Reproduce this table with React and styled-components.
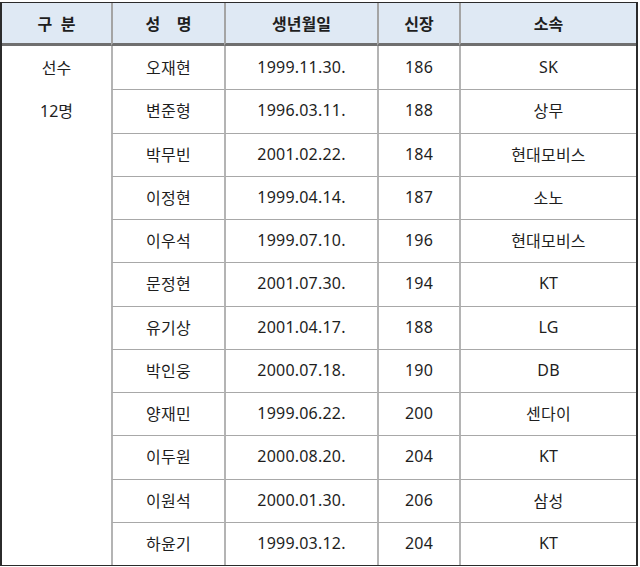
import React from "react";
import styled, { createGlobalStyle } from "styled-components";

const Global = createGlobalStyle`
  html, body { margin: 0; padding: 0; background: #fff; }
  body {
    font-family: "Noto Sans", "Noto Sans CJK KR", sans-serif;
    color: #1e1e1e;
  }
  * { box-sizing: border-box; }
`;

const Page = styled.div`
  padding-top: 2px;
`;

const Grid = styled.div`
  width: 638px;
  height: 564px;
  display: grid;
  grid-template-columns: 109px 113px 153px 82px 177px;
  grid-template-rows: 43px repeat(12, 1fr);
  border: 2px solid #2b2b2b;
  border-top-width: 1px;
  border-bottom-width: 1px;
  font-size: 16px;
`;

const HeadCell = styled.div`
  display: flex;
  align-items: center;
  justify-content: center;
  background: #dfe9f4;
  font-weight: 700;
  font-size: 16px;
  white-space: pre;
  border-left: ${(p) => (p.$first ? "none" : "2px solid #a4a4a4")};
  border-bottom: 3px solid #6f6f6f;
`;

const Cell = styled.div`
  display: flex;
  align-items: center;
  justify-content: center;
  padding-bottom: 2px;
  letter-spacing: 0.2px;
  border-left: 2px solid #b4b4b4;
  border-top: ${(p) => (p.$top ? "none" : "1px solid #a8a8a8")};
`;

const GroupCell = styled.div`
  grid-row: 2 / span 12;
  grid-column: 1;
  display: flex;
  flex-direction: column;
  align-items: center;
`;

const GroupLine = styled.div`
  height: 43.3px;
  padding-bottom: 2px;
  display: flex;
  align-items: center;
`;

const heads = ["구  분", "성    명", "생년월일", "신장", "소속"];

const players = [
  ["오재현", "1999.11.30.", "186", "SK"],
  ["변준형", "1996.03.11.", "188", "상무"],
  ["박무빈", "2001.02.22.", "184", "현대모비스"],
  ["이정현", "1999.04.14.", "187", "소노"],
  ["이우석", "1999.07.10.", "196", "현대모비스"],
  ["문정현", "2001.07.30.", "194", "KT"],
  ["유기상", "2001.04.17.", "188", "LG"],
  ["박인웅", "2000.07.18.", "190", "DB"],
  ["양재민", "1999.06.22.", "200", "센다이"],
  ["이두원", "2000.08.20.", "204", "KT"],
  ["이원석", "2000.01.30.", "206", "삼성"],
  ["하윤기", "1999.03.12.", "204", "KT"],
];

export default function App() {
  return (
    <>
      <Global />
      <Page>
        <Grid>
          {heads.map((h, i) => (
            <HeadCell key={h} $first={i === 0}>
              {h}
            </HeadCell>
          ))}
          <GroupCell>
            <GroupLine>선수</GroupLine>
            <GroupLine>12명</GroupLine>
          </GroupCell>
          {players.map((p, i) =>
            p.map((v, j) => (
              <Cell key={`${i}-${j}`} $top={i === 0}>
                {v}
              </Cell>
            ))
          )}
        </Grid>
      </Page>
    </>
  );
}
